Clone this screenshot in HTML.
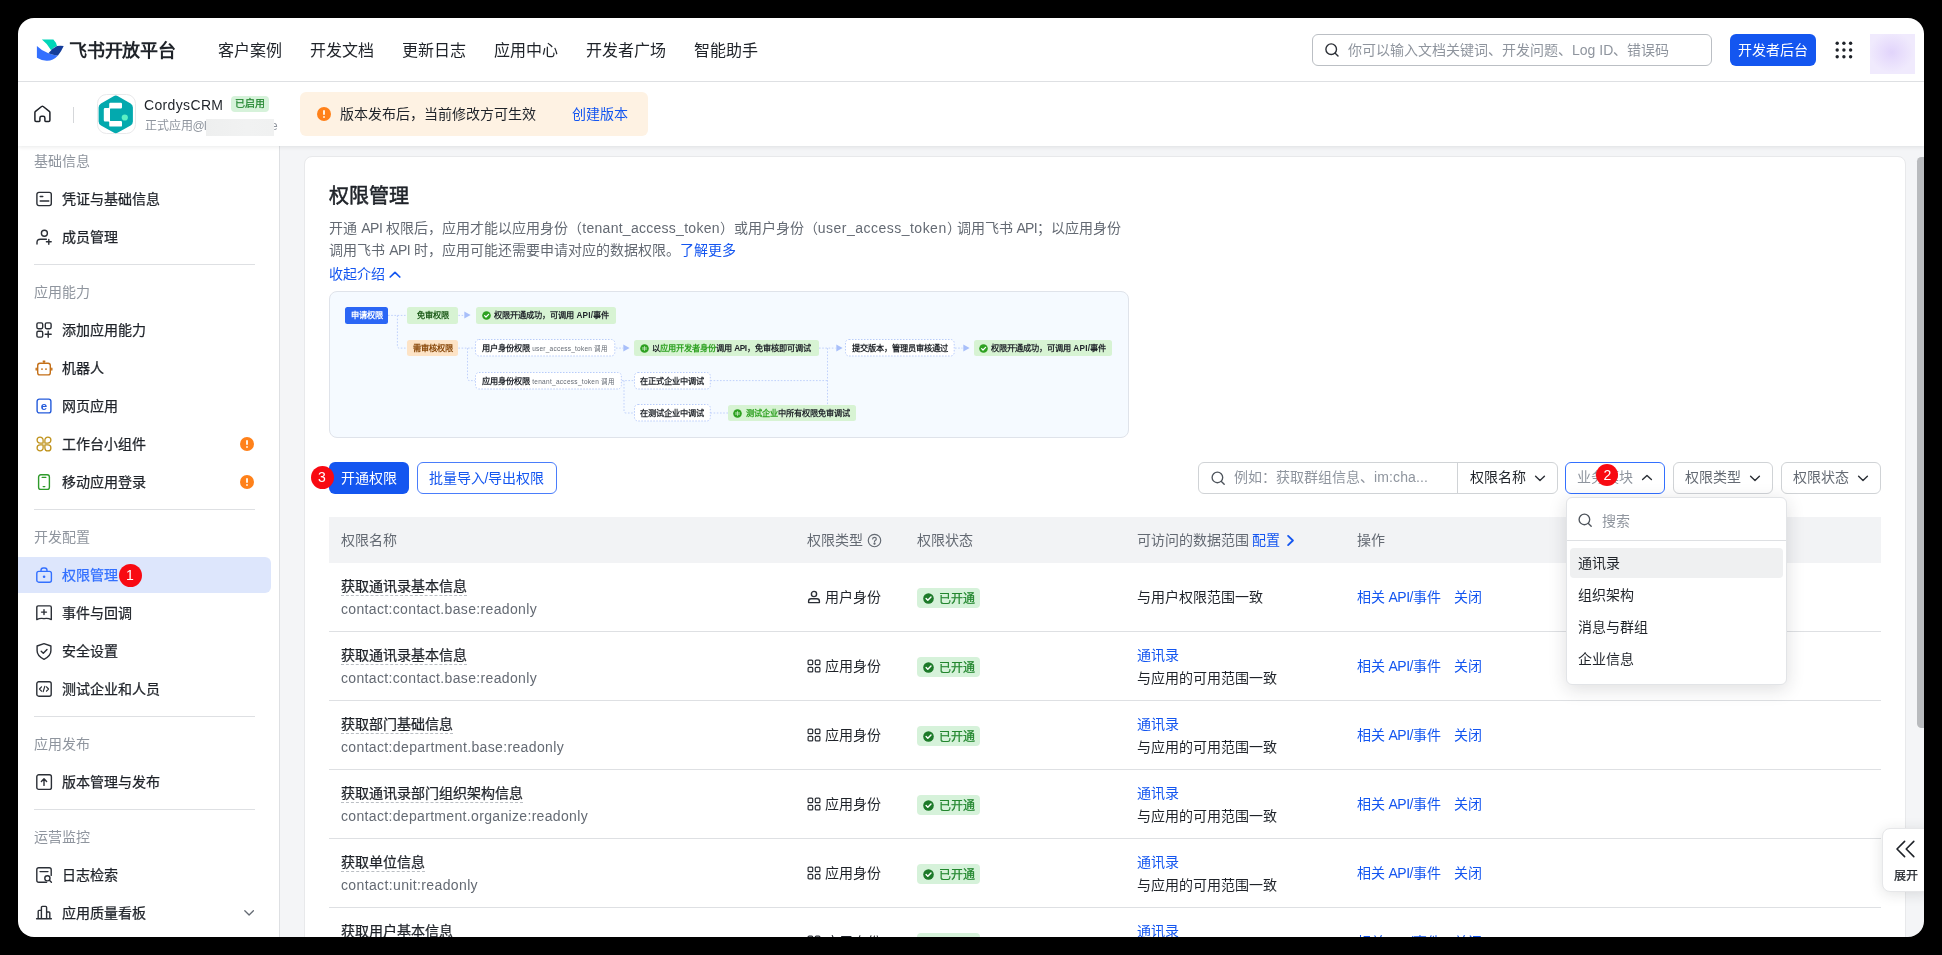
<!DOCTYPE html>
<html lang="zh-CN">
<head>
<meta charset="utf-8">
<title>飞书开放平台 - 权限管理</title>
<style>
*{box-sizing:border-box;margin:0;padding:0}
html,body{width:1942px;height:955px;overflow:hidden;background:#000}
body{font-family:"Liberation Sans",sans-serif;font-size:14px;color:#1f2329;position:relative;-webkit-font-smoothing:antialiased}
#win{position:absolute;left:0;top:0;width:1942px;height:955px;background:#fff;clip-path:inset(18px 18px 18px 18px round 16px);overflow:hidden;will-change:transform}
.abs{position:absolute}
.t{position:absolute;white-space:nowrap;line-height:22px;height:22px}
.blue{color:#1456f0}
.gray{color:#646a73}
.lgray{color:#8f959e}
svg{display:block;position:absolute;overflow:visible}
/* top nav */
#topnav{position:absolute;left:18px;top:18px;width:1906px;height:64px;background:#fff;border-bottom:1px solid #dee0e3}
.nav{position:absolute;top:40px;font-size:16px;line-height:22px;height:22px;color:#1f2329;white-space:nowrap}
/* sub header */
#subhead{position:absolute;left:18px;top:82px;width:1906px;height:63.7px;background:#fff;box-shadow:0 1px 4px rgba(31,35,41,.10)}
/* sidebar */
#side{position:absolute;left:18px;top:145.7px;width:262px;height:800px;background:#fff;border-right:1px solid #dee0e3}
.sg{position:absolute;left:34px;font-size:14px;line-height:22px;height:22px;color:#8f959e;white-space:nowrap}
.si{position:absolute;left:62px;font-size:14px;line-height:22px;height:22px;color:#1f2329;font-weight:500;white-space:nowrap;-webkit-text-stroke:.25px currentColor}
.md{-webkit-text-stroke:.25px currentColor}
.sd{position:absolute;left:34px;width:221px;height:1px;background:#dee0e3}
.warn{position:absolute;width:14px;height:14px;border-radius:50%;background:#ff811a;left:240px}
.warn:before{content:"";position:absolute;left:6.35px;top:3.2px;width:1.3px;height:4.8px;background:#fff1e0;border-radius:1px}
.warn:after{content:"";position:absolute;left:6.3px;top:9.3px;width:1.4px;height:1.4px;background:#fff1e0;border-radius:1px}
.rb{position:absolute;border-radius:50%;background:#f80a12;color:#fff;font-weight:400;text-align:center}
/* main */
#main{position:absolute;left:280px;top:145.7px;width:1644px;height:800px;background:#f4f5f7}
#card{position:absolute;left:304px;top:156.3px;width:1602px;height:800px;background:#fff;border:1px solid #e8e9eb;border-radius:8px}
</style>
</head>
<body>
<div id="win">

<!-- main background + card -->
<div id="main"></div>
<div id="card"></div>

<!-- CONTENT -->
<div class="t " style="left:329px;top:182px;font-size:20px;line-height:28px;height:28px;font-weight:400;color:#1f2329;-webkit-text-stroke:.55px #1f2329">权限管理</div>
<div class="t gray" style="left:329px;top:217px;font-size:14px;line-height:22px;height:22px;">开通</div>
<div class="t gray" style="left:361.3px;top:217px;font-size:14px;line-height:22px;height:22px;"><span style="letter-spacing:-0.526px;">API</span></div>
<div class="t gray" style="left:386px;top:217px;font-size:14px;line-height:22px;height:22px;">权限后，应用才能以应用身份（</div>
<div class="t gray" style="left:582.3px;top:217px;font-size:14px;line-height:22px;height:22px;"><span style="letter-spacing:0.272px;">tenant_access_token</span></div>
<div class="t gray" style="left:720px;top:217px;font-size:14px;line-height:22px;height:22px;">）或用户身份（</div>
<div class="t gray" style="left:817.7px;top:217px;font-size:14px;line-height:22px;height:22px;"><span style="letter-spacing:0.492px;">user_access_token</span></div>
<div class="t gray" style="left:947px;top:217px;font-size:14px;line-height:22px;height:22px;">）</div>
<div class="t gray" style="left:956.5px;top:217px;font-size:14px;line-height:22px;height:22px;">调用飞书</div>
<div class="t gray" style="left:1016.4px;top:217px;font-size:14px;line-height:22px;height:22px;"><span style="letter-spacing:-0.659px;">API</span></div>
<div class="t gray" style="left:1037px;top:217px;font-size:14px;line-height:22px;height:22px;">；以应用身份</div>
<div class="t gray" style="left:329px;top:239px;font-size:14px;line-height:22px;height:22px;">调用飞书</div>
<div class="t gray" style="left:389.3px;top:239px;font-size:14px;line-height:22px;height:22px;"><span style="letter-spacing:-0.659px;">API</span></div>
<div class="t gray" style="left:414px;top:239px;font-size:14px;line-height:22px;height:22px;">时，应用可能还需要申请对应的数据权限。</div>
<div class="t blue" style="left:680px;top:239px;font-size:14px;line-height:22px;height:22px;">了解更多</div>
<div class="t blue" style="left:329px;top:263px;font-size:14px;line-height:22px;height:22px;">收起介绍</div>
<svg style="left:388px;top:267.5px" width="14" height="14" viewBox="0 0 14 14" fill="none" stroke="#1456f0" stroke-width="1.7" stroke-linecap="round" stroke-linejoin="round"><path d="M2.2 9 L7 4.3 L11.8 9"/></svg>
<div class="abs" style="left:329px;top:291px;width:800px;height:147px;background:#f5faff;border:1px solid #dfe3ea;border-radius:8px"></div>
<svg style="left:329px;top:291px" width="800" height="147" viewBox="329 291 800 147" fill="none" stroke="#c0d1fb" stroke-width="1" stroke-dasharray="1.6 1.6"><path d="M388 315.4 H407"/><path d="M397.4 315.4 V346 Q397.4 348.1 399.5 348.1 H407"/><path d="M458.4 315.4 H464"/><path d="M458.4 348.1 H475"/><path d="M467.5 348.1 V378.5 Q467.5 380.6 469.6 380.6 H475"/><path d="M616 348.1 H623"/><path d="M622 380.6 H634"/><path d="M624 380.6 V411 Q624 413 626 413 H634"/><path d="M710.4 380.6 H827.5"/><path d="M827.5 348.1 V405"/><path d="M710.4 413 H728"/><path d="M819 348.1 H835.5"/><path d="M955 348.1 H962.5"/></svg>
<svg style="left:464.3px;top:311.4px" width="7" height="8" viewBox="0 0 7 8"><path d="M0.3 0.4 L6.6 4 L0.3 7.6Z" fill="#a8bffa"/></svg>
<svg style="left:623.2px;top:344.1px" width="7" height="8" viewBox="0 0 7 8"><path d="M0.3 0.4 L6.6 4 L0.3 7.6Z" fill="#a8bffa"/></svg>
<svg style="left:835.5px;top:344.1px" width="7" height="8" viewBox="0 0 7 8"><path d="M0.3 0.4 L6.6 4 L0.3 7.6Z" fill="#a8bffa"/></svg>
<svg style="left:962.6px;top:344.1px" width="7" height="8" viewBox="0 0 7 8"><path d="M0.3 0.4 L6.6 4 L0.3 7.6Z" fill="#a8bffa"/></svg>
<div class="abs" style="left:345px;top:307.2px;width:43px;height:16.4px;line-height:16.4px;background:#2b66f5;color:#fff;border-radius:2.5px;font-size:8.2px;font-weight:700;white-space:nowrap;padding-top:0.9px;text-align:center;">申请权限</div>
<div class="abs" style="left:407.2px;top:307.2px;width:51.2px;height:16.4px;line-height:16.4px;background:#d7f3d3;color:#1c5a18;border-radius:2.5px;font-size:8.2px;font-weight:700;white-space:nowrap;padding-top:0.9px;text-align:center;">免审权限</div>
<div class="abs" style="left:476.1px;top:307.2px;width:140.2px;height:16.4px;line-height:16.4px;background:#d7f3d3;color:#1f2329;border-radius:2.5px;font-size:8.2px;font-weight:700;white-space:nowrap;padding-top:0.9px;padding-left:18px;">权限开通成功，可调用 <span style="letter-spacing:0.266px;">API/</span>事件</div>
<svg style="left:481.5px;top:310.9px" width="9" height="9" viewBox="0 0 9 9"><circle cx="4.5" cy="4.5" r="4.3" fill="#2ea121"/><path d="M2.6 4.6 L4 6 L6.6 3.3" fill="none" stroke="#fff" stroke-width="1.2" stroke-linecap="round" stroke-linejoin="round"/></svg>
<div class="abs" style="left:407.2px;top:340.1px;width:51.2px;height:16px;line-height:16px;background:#fde3c6;color:#8a4a0c;border-radius:2.5px;font-size:8.2px;font-weight:700;white-space:nowrap;padding-top:0.9px;text-align:center;">需审核权限</div>
<svg style="left:475.3px;top:339.25px" width="140.3" height="17.5" viewBox="0 0 140.3 17.5"><rect x="0.5" y="0.5" width="139.3" height="16.5" rx="3.5" fill="#fff" stroke="#b9ccfa" stroke-width="1" stroke-dasharray="1.5 1.5"/></svg>
<div class="abs" style="left:475.3px;top:339.25px;width:140.3px;height:17.5px;line-height:17.5px;background:transparent;color:#1f2329;border-radius:2.5px;font-size:8.2px;font-weight:700;white-space:nowrap;padding-top:0.9px;padding-left:5.6px;border:1px solid transparent;background:transparent;border-radius:4px;line-height:15.5px;">用户身份权限 <span style="font-weight:400;font-size:6.5px;color:#646a73"><span style="letter-spacing:0.234px;">user_access_token</span> 调用</span></div>
<div class="abs" style="left:634px;top:340.1px;width:185px;height:16px;line-height:16px;background:#d7f3d3;color:#1f2329;border-radius:2.5px;font-size:8.2px;font-weight:700;white-space:nowrap;padding-top:0.9px;padding-left:18px;">以<span style="color:#2ea121">应用开发者身份</span>调用 <span style="letter-spacing:-0.452px;">API</span>，免审核即可调试</div>
<svg style="left:639.5px;top:343.6px" width="9" height="9" viewBox="0 0 9 9"><circle cx="4.5" cy="4.5" r="4.3" fill="#2ea121"/><path d="M4.5 2.6 V6.4 M3 3.4 V5.6 M6 3.4 V5.6" fill="none" stroke="#d9f5d6" stroke-width="0.8" stroke-linecap="round"/></svg>
<svg style="left:845.4px;top:339.25px" width="109.7" height="17.5" viewBox="0 0 109.7 17.5"><rect x="0.5" y="0.5" width="108.7" height="16.5" rx="3.5" fill="#fff" stroke="#b9ccfa" stroke-width="1" stroke-dasharray="1.5 1.5"/></svg>
<div class="abs" style="left:845.4px;top:339.25px;width:109.7px;height:17.5px;line-height:17.5px;background:transparent;color:#1f2329;border-radius:2.5px;font-size:8.2px;font-weight:700;white-space:nowrap;padding-top:0.9px;text-align:center;border:1px solid transparent;background:transparent;border-radius:4px;line-height:15.5px;">提交版本，管理员审核通过</div>
<div class="abs" style="left:973.5px;top:340.1px;width:138.6px;height:16px;line-height:16px;background:#d7f3d3;color:#1f2329;border-radius:2.5px;font-size:8.2px;font-weight:700;white-space:nowrap;padding-top:0.9px;padding-left:17.5px;">权限开通成功，可调用 <span style="letter-spacing:0.266px;">API/</span>事件</div>
<svg style="left:978.5px;top:343.6px" width="9" height="9" viewBox="0 0 9 9"><circle cx="4.5" cy="4.5" r="4.3" fill="#2ea121"/><path d="M2.6 4.6 L4 6 L6.6 3.3" fill="none" stroke="#fff" stroke-width="1.2" stroke-linecap="round" stroke-linejoin="round"/></svg>
<svg style="left:475.3px;top:371.85px" width="146.8" height="17.5" viewBox="0 0 146.8 17.5"><rect x="0.5" y="0.5" width="145.8" height="16.5" rx="3.5" fill="#fff" stroke="#b9ccfa" stroke-width="1" stroke-dasharray="1.5 1.5"/></svg>
<div class="abs" style="left:475.3px;top:371.85px;width:146.8px;height:17.5px;line-height:17.5px;background:transparent;color:#1f2329;border-radius:2.5px;font-size:8.2px;font-weight:700;white-space:nowrap;padding-top:0.9px;padding-left:5.6px;border:1px solid transparent;background:transparent;border-radius:4px;line-height:15.5px;">应用身份权限 <span style="font-weight:400;font-size:6.5px;color:#646a73"><span style="letter-spacing:0.293px;">tenant_access_token</span> 调用</span></div>
<svg style="left:633.6px;top:371.85px" width="76.8" height="17.5" viewBox="0 0 76.8 17.5"><rect x="0.5" y="0.5" width="75.8" height="16.5" rx="3.5" fill="#fff" stroke="#b9ccfa" stroke-width="1" stroke-dasharray="1.5 1.5"/></svg>
<div class="abs" style="left:633.6px;top:371.85px;width:76.8px;height:17.5px;line-height:17.5px;background:transparent;color:#1f2329;border-radius:2.5px;font-size:8.2px;font-weight:700;white-space:nowrap;padding-top:0.9px;text-align:center;border:1px solid transparent;background:transparent;border-radius:4px;line-height:15.5px;">在正式企业中调试</div>
<svg style="left:633.6px;top:404.25px" width="76.8" height="17.5" viewBox="0 0 76.8 17.5"><rect x="0.5" y="0.5" width="75.8" height="16.5" rx="3.5" fill="#fff" stroke="#b9ccfa" stroke-width="1" stroke-dasharray="1.5 1.5"/></svg>
<div class="abs" style="left:633.6px;top:404.25px;width:76.8px;height:17.5px;line-height:17.5px;background:transparent;color:#1f2329;border-radius:2.5px;font-size:8.2px;font-weight:700;white-space:nowrap;padding-top:0.9px;text-align:center;border:1px solid transparent;background:transparent;border-radius:4px;line-height:15.5px;">在测试企业中调试</div>
<div class="abs" style="left:728px;top:405px;width:127.8px;height:16px;line-height:16px;background:#d7f3d3;color:#1f2329;border-radius:2.5px;font-size:8.2px;font-weight:700;white-space:nowrap;padding-top:0.9px;padding-left:17.5px;"><span style="color:#2ea121">测试企业</span>中所有权限免审调试</div>
<svg style="left:733.2px;top:408.5px" width="9" height="9" viewBox="0 0 9 9"><circle cx="4.5" cy="4.5" r="4.3" fill="#2ea121"/><path d="M4.5 2.6 V6.4 M3 3.4 V5.6 M6 3.4 V5.6" fill="none" stroke="#d9f5d6" stroke-width="0.8" stroke-linecap="round"/></svg>
<div class="abs" style="left:329px;top:461.5px;width:80px;height:32px;border-radius:6px;background:#1456f0;color:#fff;font-size:14px;line-height:32px;text-align:center;white-space:nowrap">开通权限</div>
<div class="rb" style="left:310.5px;top:465.5px;width:23px;height:23px;font-size:14px;line-height:23px">3</div>
<div class="abs" style="left:416.5px;top:461.5px;width:140px;height:32px;border-radius:6px;border:1px solid #4a7dfb;background:#fff;color:#1456f0;font-size:14px;line-height:30px;text-align:center;white-space:nowrap">批量导入<span style="letter-spacing:0.000px;">/</span>导出权限</div>
<div class="abs" style="left:1198px;top:461.5px;width:359.5px;height:32px;border:1px solid #d0d3d6;border-radius:6px;background:#fff"></div>
<div class="abs" style="left:1457px;top:462.5px;width:1px;height:30px;background:#d0d3d6"></div>
<svg style="left:1210px;top:469.5px" width="16" height="16" viewBox="0 0 16 16" fill="none" stroke="#4e545c" stroke-width="1.35" stroke-linecap="round"><circle cx="7.4" cy="7.4" r="5.3"/><path d="M11.4 11.4 L14.2 14.2"/></svg>
<div class="t lgray" style="left:1234px;top:466.3px;font-size:14px;line-height:22px;height:22px;">例如：获取群组信息、<span style="letter-spacing:0.122px;">im:cha...</span></div>
<div class="t " style="left:1469.5px;top:466.3px;font-size:14px;line-height:22px;height:22px;">权限名称</div>
<svg style="left:1533.5px;top:471.5px" width="12" height="12" viewBox="0 0 12 12" fill="none" stroke="#2b2f36" stroke-width="1.4" stroke-linecap="round" stroke-linejoin="round"><path d="M1.6 4.2 L6 8.4 L10.4 4.2"/></svg>
<div class="abs" style="left:1564.8px;top:461.5px;width:100px;height:32px;border:1px solid #3370ff;border-radius:6px;background:#fff"></div>
<div class="t lgray" style="left:1576.8px;top:466.3px;font-size:14px;line-height:22px;height:22px;">业务模块</div>
<svg style="left:1641px;top:471.5px" width="12" height="12" viewBox="0 0 12 12" fill="none" stroke="#2b2f36" stroke-width="1.4" stroke-linecap="round" stroke-linejoin="round"><path d="M1.6 7.6 L6 3.4 L10.4 7.6"/></svg>
<div class="abs" style="left:1672.8px;top:461.5px;width:100px;height:32px;border:1px solid #d0d3d6;border-radius:6px;background:#fff"></div>
<div class="t gray" style="left:1684.8px;top:466.3px;font-size:14px;line-height:22px;height:22px;">权限类型</div>
<svg style="left:1749px;top:471.5px" width="12" height="12" viewBox="0 0 12 12" fill="none" stroke="#2b2f36" stroke-width="1.4" stroke-linecap="round" stroke-linejoin="round"><path d="M1.6 4.2 L6 8.4 L10.4 4.2"/></svg>
<div class="abs" style="left:1780.8px;top:461.5px;width:100px;height:32px;border:1px solid #d0d3d6;border-radius:6px;background:#fff"></div>
<div class="t gray" style="left:1792.8px;top:466.3px;font-size:14px;line-height:22px;height:22px;">权限状态</div>
<svg style="left:1857px;top:471.5px" width="12" height="12" viewBox="0 0 12 12" fill="none" stroke="#2b2f36" stroke-width="1.4" stroke-linecap="round" stroke-linejoin="round"><path d="M1.6 4.2 L6 8.4 L10.4 4.2"/></svg>
<div class="abs" style="left:329px;top:517px;width:1552px;height:46px;background:#f2f3f5"></div>
<div class="t gray" style="left:341px;top:529px;font-size:14px;line-height:22px;height:22px;">权限名称</div>
<div class="t gray" style="left:807px;top:529px;font-size:14px;line-height:22px;height:22px;">权限类型</div>
<svg style="left:866.5px;top:532.5px" width="15" height="15" viewBox="0 0 14 14" fill="none" stroke="#646a73" stroke-width="1.1" stroke-linecap="round"><circle cx="7" cy="7" r="5.8"/><path d="M5.3 5.6 Q5.3 4 7 4 Q8.7 4 8.7 5.5 Q8.7 6.5 7.6 7 Q7 7.3 7 8.2"/><circle cx="7" cy="10" r="0.5" fill="#646a73"/></svg>
<div class="t gray" style="left:917px;top:529px;font-size:14px;line-height:22px;height:22px;">权限状态</div>
<div class="t gray" style="left:1137px;top:529px;font-size:14px;line-height:22px;height:22px;">可访问的数据范围</div>
<div class="t blue" style="left:1252px;top:529px;font-size:14px;line-height:22px;height:22px;">配置</div>
<svg style="left:1283.5px;top:533.5px" width="13" height="13" viewBox="0 0 12 12" fill="none" stroke="#1456f0" stroke-width="1.7" stroke-linecap="round" stroke-linejoin="round"><path d="M3.8 1.8 L8.2 6 L3.8 10.2"/></svg>
<div class="t gray" style="left:1357px;top:529px;font-size:14px;line-height:22px;height:22px;">操作</div>
<div class="abs" style="left:329px;top:631px;width:1552px;height:1px;background:#dee0e3"></div>
<div class="t " style="left:341px;top:575px;font-size:14px;line-height:22px;height:22px;font-weight:500;-webkit-text-stroke:.25px #1f2329"><span style="border-bottom:1px dashed #bbbfc4;padding-bottom:0px;display:inline-block;line-height:19px;height:19px">获取通讯录基本信息</span></div>
<div class="t gray" style="left:341px;top:597.5px;font-size:14px;line-height:22px;height:22px;"><span style="letter-spacing:0.344px;">contact:contact.base:readonly</span></div>
<svg style="left:807px;top:590px" width="14" height="14" viewBox="0 0 14 14" fill="none" stroke="#2b2f36" stroke-width="1.4" stroke-linecap="round" stroke-linejoin="round"><circle cx="7" cy="4" r="2.6"/><path d="M1.6 12.6 V11.2 Q1.6 8.8 4 8.8 H10 Q12.4 8.8 12.4 11.2 V12.6 Z"/></svg>
<div class="t " style="left:825px;top:586px;font-size:14px;line-height:22px;height:22px;">用户身份</div>
<div class="abs" style="left:917px;top:588px;width:63px;height:20px;border-radius:4px;background:#d6f2da"></div>
<svg style="left:923px;top:592.5px" width="11" height="11" viewBox="0 0 11 11"><circle cx="5.5" cy="5.5" r="5.3" fill="#1d7a29"/><path d="M3.1 5.6 L4.8 7.3 L8 3.9" fill="none" stroke="#fff" stroke-width="1.4" stroke-linecap="round" stroke-linejoin="round"/></svg>
<div class="t " style="left:939px;top:588.8px;font-size:12px;line-height:20px;height:20px;color:#23872f;font-weight:500;-webkit-text-stroke:.25px #23872f">已开通</div>
<div class="t " style="left:1137px;top:586px;font-size:14px;line-height:22px;height:22px;">与用户权限范围一致</div>
<div class="t blue" style="left:1357px;top:586px;font-size:14px;line-height:22px;height:22px;">相关<span style="letter-spacing:-0.472px;"> API/</span>事件</div>
<div class="t blue" style="left:1454px;top:586px;font-size:14px;line-height:22px;height:22px;">关闭</div>
<div class="abs" style="left:329px;top:700px;width:1552px;height:1px;background:#dee0e3"></div>
<div class="t " style="left:341px;top:644px;font-size:14px;line-height:22px;height:22px;font-weight:500;-webkit-text-stroke:.25px #1f2329"><span style="border-bottom:1px dashed #bbbfc4;padding-bottom:0px;display:inline-block;line-height:19px;height:19px">获取通讯录基本信息</span></div>
<div class="t gray" style="left:341px;top:666.5px;font-size:14px;line-height:22px;height:22px;"><span style="letter-spacing:0.344px;">contact:contact.base:readonly</span></div>
<svg style="left:807px;top:659px" width="14" height="14" viewBox="0 0 14 14" fill="none" stroke="#2b2f36" stroke-width="1.2"><rect x="1.1" y="1.1" width="4.6" height="4.6" rx="1"/><rect x="8.3" y="1.1" width="4.6" height="4.6" rx="1"/><rect x="1.1" y="8.3" width="4.6" height="4.6" rx="1"/><rect x="8.3" y="8.3" width="4.6" height="4.6" rx="1"/></svg>
<div class="t " style="left:825px;top:655px;font-size:14px;line-height:22px;height:22px;">应用身份</div>
<div class="abs" style="left:917px;top:657px;width:63px;height:20px;border-radius:4px;background:#d6f2da"></div>
<svg style="left:923px;top:661.5px" width="11" height="11" viewBox="0 0 11 11"><circle cx="5.5" cy="5.5" r="5.3" fill="#1d7a29"/><path d="M3.1 5.6 L4.8 7.3 L8 3.9" fill="none" stroke="#fff" stroke-width="1.4" stroke-linecap="round" stroke-linejoin="round"/></svg>
<div class="t " style="left:939px;top:657.8px;font-size:12px;line-height:20px;height:20px;color:#23872f;font-weight:500;-webkit-text-stroke:.25px #23872f">已开通</div>
<div class="t blue" style="left:1137px;top:644px;font-size:14px;line-height:22px;height:22px;">通讯录</div>
<div class="t " style="left:1137px;top:666.5px;font-size:14px;line-height:22px;height:22px;">与应用的可用范围一致</div>
<div class="t blue" style="left:1357px;top:655px;font-size:14px;line-height:22px;height:22px;">相关<span style="letter-spacing:-0.472px;"> API/</span>事件</div>
<div class="t blue" style="left:1454px;top:655px;font-size:14px;line-height:22px;height:22px;">关闭</div>
<div class="abs" style="left:329px;top:769px;width:1552px;height:1px;background:#dee0e3"></div>
<div class="t " style="left:341px;top:713px;font-size:14px;line-height:22px;height:22px;font-weight:500;-webkit-text-stroke:.25px #1f2329"><span style="border-bottom:1px dashed #bbbfc4;padding-bottom:0px;display:inline-block;line-height:19px;height:19px">获取部门基础信息</span></div>
<div class="t gray" style="left:341px;top:735.5px;font-size:14px;line-height:22px;height:22px;"><span style="letter-spacing:0.353px;">contact:department.base:readonly</span></div>
<svg style="left:807px;top:728px" width="14" height="14" viewBox="0 0 14 14" fill="none" stroke="#2b2f36" stroke-width="1.2"><rect x="1.1" y="1.1" width="4.6" height="4.6" rx="1"/><rect x="8.3" y="1.1" width="4.6" height="4.6" rx="1"/><rect x="1.1" y="8.3" width="4.6" height="4.6" rx="1"/><rect x="8.3" y="8.3" width="4.6" height="4.6" rx="1"/></svg>
<div class="t " style="left:825px;top:724px;font-size:14px;line-height:22px;height:22px;">应用身份</div>
<div class="abs" style="left:917px;top:726px;width:63px;height:20px;border-radius:4px;background:#d6f2da"></div>
<svg style="left:923px;top:730.5px" width="11" height="11" viewBox="0 0 11 11"><circle cx="5.5" cy="5.5" r="5.3" fill="#1d7a29"/><path d="M3.1 5.6 L4.8 7.3 L8 3.9" fill="none" stroke="#fff" stroke-width="1.4" stroke-linecap="round" stroke-linejoin="round"/></svg>
<div class="t " style="left:939px;top:726.8px;font-size:12px;line-height:20px;height:20px;color:#23872f;font-weight:500;-webkit-text-stroke:.25px #23872f">已开通</div>
<div class="t blue" style="left:1137px;top:713px;font-size:14px;line-height:22px;height:22px;">通讯录</div>
<div class="t " style="left:1137px;top:735.5px;font-size:14px;line-height:22px;height:22px;">与应用的可用范围一致</div>
<div class="t blue" style="left:1357px;top:724px;font-size:14px;line-height:22px;height:22px;">相关<span style="letter-spacing:-0.472px;"> API/</span>事件</div>
<div class="t blue" style="left:1454px;top:724px;font-size:14px;line-height:22px;height:22px;">关闭</div>
<div class="abs" style="left:329px;top:838px;width:1552px;height:1px;background:#dee0e3"></div>
<div class="t " style="left:341px;top:782px;font-size:14px;line-height:22px;height:22px;font-weight:500;-webkit-text-stroke:.25px #1f2329"><span style="border-bottom:1px dashed #bbbfc4;padding-bottom:0px;display:inline-block;line-height:19px;height:19px">获取通讯录部门组织架构信息</span></div>
<div class="t gray" style="left:341px;top:804.5px;font-size:14px;line-height:22px;height:22px;"><span style="letter-spacing:0.332px;">contact:department.organize:readonly</span></div>
<svg style="left:807px;top:797px" width="14" height="14" viewBox="0 0 14 14" fill="none" stroke="#2b2f36" stroke-width="1.2"><rect x="1.1" y="1.1" width="4.6" height="4.6" rx="1"/><rect x="8.3" y="1.1" width="4.6" height="4.6" rx="1"/><rect x="1.1" y="8.3" width="4.6" height="4.6" rx="1"/><rect x="8.3" y="8.3" width="4.6" height="4.6" rx="1"/></svg>
<div class="t " style="left:825px;top:793px;font-size:14px;line-height:22px;height:22px;">应用身份</div>
<div class="abs" style="left:917px;top:795px;width:63px;height:20px;border-radius:4px;background:#d6f2da"></div>
<svg style="left:923px;top:799.5px" width="11" height="11" viewBox="0 0 11 11"><circle cx="5.5" cy="5.5" r="5.3" fill="#1d7a29"/><path d="M3.1 5.6 L4.8 7.3 L8 3.9" fill="none" stroke="#fff" stroke-width="1.4" stroke-linecap="round" stroke-linejoin="round"/></svg>
<div class="t " style="left:939px;top:795.8px;font-size:12px;line-height:20px;height:20px;color:#23872f;font-weight:500;-webkit-text-stroke:.25px #23872f">已开通</div>
<div class="t blue" style="left:1137px;top:782px;font-size:14px;line-height:22px;height:22px;">通讯录</div>
<div class="t " style="left:1137px;top:804.5px;font-size:14px;line-height:22px;height:22px;">与应用的可用范围一致</div>
<div class="t blue" style="left:1357px;top:793px;font-size:14px;line-height:22px;height:22px;">相关<span style="letter-spacing:-0.472px;"> API/</span>事件</div>
<div class="t blue" style="left:1454px;top:793px;font-size:14px;line-height:22px;height:22px;">关闭</div>
<div class="abs" style="left:329px;top:907px;width:1552px;height:1px;background:#dee0e3"></div>
<div class="t " style="left:341px;top:851px;font-size:14px;line-height:22px;height:22px;font-weight:500;-webkit-text-stroke:.25px #1f2329"><span style="border-bottom:1px dashed #bbbfc4;padding-bottom:0px;display:inline-block;line-height:19px;height:19px">获取单位信息</span></div>
<div class="t gray" style="left:341px;top:873.5px;font-size:14px;line-height:22px;height:22px;"><span style="letter-spacing:0.371px;">contact:unit:readonly</span></div>
<svg style="left:807px;top:866px" width="14" height="14" viewBox="0 0 14 14" fill="none" stroke="#2b2f36" stroke-width="1.2"><rect x="1.1" y="1.1" width="4.6" height="4.6" rx="1"/><rect x="8.3" y="1.1" width="4.6" height="4.6" rx="1"/><rect x="1.1" y="8.3" width="4.6" height="4.6" rx="1"/><rect x="8.3" y="8.3" width="4.6" height="4.6" rx="1"/></svg>
<div class="t " style="left:825px;top:862px;font-size:14px;line-height:22px;height:22px;">应用身份</div>
<div class="abs" style="left:917px;top:864px;width:63px;height:20px;border-radius:4px;background:#d6f2da"></div>
<svg style="left:923px;top:868.5px" width="11" height="11" viewBox="0 0 11 11"><circle cx="5.5" cy="5.5" r="5.3" fill="#1d7a29"/><path d="M3.1 5.6 L4.8 7.3 L8 3.9" fill="none" stroke="#fff" stroke-width="1.4" stroke-linecap="round" stroke-linejoin="round"/></svg>
<div class="t " style="left:939px;top:864.8px;font-size:12px;line-height:20px;height:20px;color:#23872f;font-weight:500;-webkit-text-stroke:.25px #23872f">已开通</div>
<div class="t blue" style="left:1137px;top:851px;font-size:14px;line-height:22px;height:22px;">通讯录</div>
<div class="t " style="left:1137px;top:873.5px;font-size:14px;line-height:22px;height:22px;">与应用的可用范围一致</div>
<div class="t blue" style="left:1357px;top:862px;font-size:14px;line-height:22px;height:22px;">相关<span style="letter-spacing:-0.472px;"> API/</span>事件</div>
<div class="t blue" style="left:1454px;top:862px;font-size:14px;line-height:22px;height:22px;">关闭</div>
<div class="t " style="left:341px;top:920px;font-size:14px;line-height:22px;height:22px;font-weight:500;-webkit-text-stroke:.25px #1f2329"><span style="border-bottom:1px dashed #bbbfc4;padding-bottom:0px;display:inline-block;line-height:19px;height:19px">获取用户基本信息</span></div>
<div class="t gray" style="left:341px;top:942.5px;font-size:14px;line-height:22px;height:22px;"><span style="letter-spacing:0.141px;">contact:user.base:readonly</span></div>
<svg style="left:807px;top:935px" width="14" height="14" viewBox="0 0 14 14" fill="none" stroke="#2b2f36" stroke-width="1.2"><rect x="1.1" y="1.1" width="4.6" height="4.6" rx="1"/><rect x="8.3" y="1.1" width="4.6" height="4.6" rx="1"/><rect x="1.1" y="8.3" width="4.6" height="4.6" rx="1"/><rect x="8.3" y="8.3" width="4.6" height="4.6" rx="1"/></svg>
<div class="t " style="left:825px;top:931px;font-size:14px;line-height:22px;height:22px;">应用身份</div>
<div class="abs" style="left:917px;top:933px;width:63px;height:20px;border-radius:4px;background:#d6f2da"></div>
<svg style="left:923px;top:937.5px" width="11" height="11" viewBox="0 0 11 11"><circle cx="5.5" cy="5.5" r="5.3" fill="#1d7a29"/><path d="M3.1 5.6 L4.8 7.3 L8 3.9" fill="none" stroke="#fff" stroke-width="1.4" stroke-linecap="round" stroke-linejoin="round"/></svg>
<div class="t " style="left:939px;top:933.8px;font-size:12px;line-height:20px;height:20px;color:#23872f;font-weight:500;-webkit-text-stroke:.25px #23872f">已开通</div>
<div class="t blue" style="left:1137px;top:920px;font-size:14px;line-height:22px;height:22px;">通讯录</div>
<div class="t " style="left:1137px;top:942.5px;font-size:14px;line-height:22px;height:22px;">与应用的可用范围一致</div>
<div class="t blue" style="left:1357px;top:931px;font-size:14px;line-height:22px;height:22px;">相关<span style="letter-spacing:-0.472px;"> API/</span>事件</div>
<div class="t blue" style="left:1454px;top:931px;font-size:14px;line-height:22px;height:22px;">关闭</div>
<div class="abs" style="left:1565.5px;top:496.5px;width:221px;height:188.5px;background:#fff;border:1px solid #e2e4e7;border-radius:6px;box-shadow:0 4px 18px rgba(31,35,41,.15)"></div>
<svg style="left:1577px;top:512px" width="16" height="16" viewBox="0 0 16 16" fill="none" stroke="#4e545c" stroke-width="1.35" stroke-linecap="round"><circle cx="7.4" cy="7.4" r="5.3"/><path d="M11.4 11.4 L14.2 14.2"/></svg>
<div class="t lgray" style="left:1602px;top:509.5px;font-size:14px;line-height:22px;height:22px;">搜索</div>
<div class="abs" style="left:1566.5px;top:540px;width:219px;height:1px;background:#dee0e3"></div>
<div class="abs" style="left:1570px;top:547.5px;width:213px;height:30px;background:#eff0f1;border-radius:4px"></div>
<div class="t " style="left:1578px;top:551.5px;font-size:14px;line-height:22px;height:22px;">通讯录</div>
<div class="t " style="left:1578px;top:583.5px;font-size:14px;line-height:22px;height:22px;">组织架构</div>
<div class="t " style="left:1578px;top:615.5px;font-size:14px;line-height:22px;height:22px;">消息与群组</div>
<div class="t " style="left:1578px;top:647.5px;font-size:14px;line-height:22px;height:22px;">企业信息</div>
<div class="rb" style="left:1596.3px;top:463.6px;width:22px;height:22px;font-size:14px;line-height:22px">2</div>
<!-- /CONTENT -->

<!-- SIDEBAR -->
<div id="side"></div>
<div class="sg" style="top:150px">基础信息</div>
<svg style="left:36px;top:191px" width="16" height="16" viewBox="0 0 16 16" fill="none" stroke="#2b2f36" stroke-width="1.4" stroke-linecap="round" stroke-linejoin="round"><rect x="0.9" y="1.4" width="14.4" height="13.2" rx="2"/><path d="M4.2 5.5 H6.8 M4.2 10 H12.8"/></svg>
<div class="si" style="top:188px">凭证与基础信息</div>
<svg style="left:36px;top:229px" width="16" height="16" viewBox="0 0 16 16" fill="none" stroke="#2b2f36" stroke-width="1.4" stroke-linecap="round" stroke-linejoin="round"><circle cx="8.4" cy="4.2" r="3"/><path d="M1 15 V13.4 Q1 10.3 4.4 10.3 H10.4 M12.8 10.4 V15.2 M10.4 12.8 H15.2"/></svg>
<div class="si" style="top:226px">成员管理</div>
<div class="sd" style="top:264px"></div>
<div class="sg" style="top:281px">应用能力</div>
<svg style="left:36px;top:322px" width="16" height="16" viewBox="0 0 16 16" fill="none" stroke="#2b2f36" stroke-width="1.4" stroke-linecap="round" stroke-linejoin="round"><rect x="0.9" y="0.9" width="5.8" height="5.8" rx="1.4"/><rect x="9.3" y="0.9" width="5.8" height="5.8" rx="1.4"/><rect x="0.9" y="9.3" width="5.8" height="5.8" rx="1.4"/><path d="M12.2 9.2 V15.2 M9.2 12.2 H15.2"/></svg>
<div class="si" style="top:319px">添加应用能力</div>
<svg style="left:36px;top:360px" width="16" height="16" viewBox="0 0 16 16" fill="none" stroke="#c46f17" stroke-width="1.4" stroke-linecap="round" stroke-linejoin="round"><rect x="1.7" y="3.3" width="12.6" height="11.6" rx="2.2"/><path d="M8 3.2 V1.4 M7.2 1.3 H8.8 M0.2 8.2 V10 M15.8 8.2 V10"/><circle cx="6" cy="9.1" r="0.95" fill="#c46f17" stroke="none"/><circle cx="10" cy="9.1" r="0.95" fill="#c46f17" stroke="none"/></svg>
<div class="si" style="top:357px">机器人</div>
<svg style="left:36px;top:398px" width="16" height="16" viewBox="0 0 16 16" fill="none" stroke="#245bdb" stroke-width="1.4" stroke-linecap="round" stroke-linejoin="round"><rect x="1.1" y="1.1" width="13.8" height="13.8" rx="2.2"/><text x="8" y="11.6" font-family="Liberation Sans, sans-serif" font-size="11.5" font-weight="700" text-anchor="middle" fill="#245bdb" stroke="none">e</text></svg>
<div class="si" style="top:395px">网页应用</div>
<svg style="left:36px;top:436px" width="16" height="16" viewBox="0 0 16 16" fill="none" stroke="#bf921b" stroke-width="1.4" stroke-linecap="round" stroke-linejoin="round"><path d="M4.1 1.1 A3 3 0 0 1 7.1 4.1 V7.1 H4.1 A3 3 0 0 1 4.1 1.1Z M11.9 1.1 A3 3 0 0 1 11.9 7.1 H8.9 V4.1 A3 3 0 0 1 11.9 1.1Z M4.1 8.9 H7.1 V11.9 A3 3 0 1 1 4.1 8.9Z M8.9 8.9 H11.9 A3 3 0 1 1 8.9 11.9Z" stroke-width="1.3"/></svg>
<div class="si" style="top:433px">工作台小组件</div>
<div class="warn" style="top:437px"></div>
<svg style="left:36px;top:474px" width="16" height="16" viewBox="0 0 16 16" fill="none" stroke="#2f9a2b" stroke-width="1.4" stroke-linecap="round" stroke-linejoin="round"><rect x="2.6" y="0.8" width="10.8" height="14.6" rx="2.2"/><path d="M6.2 3.4 H9.8 M7.2 12.6 H8.8"/></svg>
<div class="si" style="top:471px">移动应用登录</div>
<div class="warn" style="top:475px"></div>
<div class="sd" style="top:509px"></div>
<div class="sg" style="top:526px">开发配置</div>
<div class="abs" style="left:18px;top:557px;width:253px;height:36px;background:#dde6fc;border-radius:0 6px 6px 0"></div>
<svg style="left:36px;top:567px" width="16" height="16" viewBox="0 0 16 16" fill="none" stroke="#3370ff" stroke-width="1.4" stroke-linecap="round" stroke-linejoin="round"><rect x="0.8" y="4.4" width="14.6" height="10.8" rx="2"/><path d="M5 4.4 V3.2 Q5 1 7.2 1 H8.8 Q11 1 11 3.2 V4.4"/><circle cx="8.1" cy="9.8" r="1.3" fill="#3370ff" stroke="none"/></svg>
<div class="si" style="top:564px;color:#3370ff">权限管理</div>
<div class="rb" style="left:118.5px;top:563.5px;width:23px;height:23px;font-size:14px;line-height:23px">1</div>
<svg style="left:36px;top:605px" width="16" height="16" viewBox="0 0 16 16" fill="none" stroke="#2b2f36" stroke-width="1.4" stroke-linecap="round" stroke-linejoin="round"><path d="M2.3 0.9 H13.8 Q15.3 0.9 15.3 2.4 V14.6 Q11.6 12.7 8 13.7 Q4.4 12.7 0.8 14.6 V2.4 Q0.8 0.9 2.3 0.9Z"/><path d="M8 4.6 V9.6 M5.5 7.1 H10.5"/></svg>
<div class="si" style="top:602px">事件与回调</div>
<svg style="left:36px;top:643px" width="16" height="16" viewBox="0 0 16 16" fill="none" stroke="#2b2f36" stroke-width="1.4" stroke-linecap="round" stroke-linejoin="round"><path d="M8 0.7 L14.9 3 V7.8 Q14.9 13 8 16.3 Q1.1 13 1.1 7.8 V3 Z"/><path d="M5.2 8.2 L7.3 10.3 L11 6.4"/></svg>
<div class="si" style="top:640px">安全设置</div>
<svg style="left:36px;top:681px" width="16" height="16" viewBox="0 0 16 16" fill="none" stroke="#2b2f36" stroke-width="1.4" stroke-linecap="round" stroke-linejoin="round"><rect x="0.8" y="0.8" width="14.4" height="14.4" rx="2"/><path d="M5.5 5.8 L3.5 8 L5.5 10.2 M10.5 5.8 L12.5 8 L10.5 10.2 M8.8 5.4 L7.2 10.6" stroke-width="1.2"/></svg>
<div class="si" style="top:678px">测试企业和人员</div>
<div class="sd" style="top:716px"></div>
<div class="sg" style="top:733px">应用发布</div>
<svg style="left:36px;top:774px" width="16" height="16" viewBox="0 0 16 16" fill="none" stroke="#2b2f36" stroke-width="1.4" stroke-linecap="round" stroke-linejoin="round"><rect x="0.8" y="0.8" width="14.6" height="14.6" rx="2"/><path d="M8 11.4 V5 M5.4 7.4 L8 4.8 L10.6 7.4"/></svg>
<div class="si" style="top:771px">版本管理与发布</div>
<div class="sd" style="top:809px"></div>
<div class="sg" style="top:826px">运营监控</div>
<svg style="left:36px;top:867px" width="16" height="16" viewBox="0 0 16 16" fill="none" stroke="#2b2f36" stroke-width="1.4" stroke-linecap="round" stroke-linejoin="round"><path d="M10.6 15.2 H2.8 Q0.8 15.2 0.8 13.2 V2.8 Q0.8 0.8 2.8 0.8 H13.2 Q15.2 0.8 15.2 2.8 V8.4"/><path d="M4 4.6 H12"/><circle cx="11.4" cy="11.3" r="2.6"/><path d="M13.4 13.3 L15.4 15.3"/></svg>
<div class="si" style="top:864px">日志检索</div>
<svg style="left:36px;top:905px" width="16" height="16" viewBox="0 0 16 16" fill="none" stroke="#2b2f36" stroke-width="1.4" stroke-linecap="round" stroke-linejoin="round"><path d="M0.6 13.8 H15.4 M2.2 13.8 V6.2 Q2.2 5.4 3 5.4 H5.4 M5.4 13.8 V2.4 Q5.4 1.4 6.4 1.4 H9.6 Q10.6 1.4 10.6 2.4 V13.8 M10.6 7 H13 Q13.8 7 13.8 7.8 V13.8"/></svg>
<div class="si" style="top:902px">应用质量看板</div>
<svg style="left:243px;top:907px" width="12" height="12" viewBox="0 0 12 12" fill="none" stroke="#646a73" stroke-width="1.3" stroke-linecap="round" stroke-linejoin="round"><path d="M1.8 3.8 L6.1 8 L10.4 3.8"/></svg>
<!-- /SIDEBAR -->

<!-- SUBHEAD -->
<div id="subhead"></div>
<!-- home icon -->
<svg style="left:33px;top:104px" width="20" height="20" viewBox="33 104 20 20" fill="none" stroke="#1f2329" stroke-width="1.5" stroke-linejoin="round" stroke-linecap="round">
  <path d="M34.9 112.6 Q34.9 111.9 35.5 111.4 L41.6 106.5 Q42.4 105.9 43.2 106.5 L49.3 111.4 Q49.9 111.9 49.9 112.6 V120.2 Q49.9 121.4 48.7 121.4 H45.6 Q44.9 121.4 44.9 120.7 V117.9 Q44.9 116.2 43.2 116.2 H41.6 Q39.9 116.2 39.9 117.9 V120.7 Q39.9 121.4 39.2 121.4 H36.1 Q34.9 121.4 34.9 120.2 Z"/>
</svg>
<div class="abs" style="left:73px;top:107px;width:1px;height:16px;background:#d5d7da"></div>
<!-- app icon -->
<div class="abs" style="left:97px;top:94px;width:38.5px;height:40px;border:1px solid #e9e9eb;border-radius:9.5px;background:#fff"></div>
<svg style="left:97px;top:94px" width="39" height="40" viewBox="97 94 39 40">
  <path d="M113.6 96.2 Q115.8 94.9 118 96.2 L130.6 103.5 Q132.9 104.9 132.9 107.5 V121.4 Q132.9 124 130.6 125.4 L118 132.6 Q115.8 133.9 113.6 132.6 L101 125.4 Q98.6 124 98.6 121.4 V107.5 Q98.6 104.9 101 103.5 Z" fill="#03a9ae"/>
  <path d="M110.4 102.8 H120.8 Q122 102.8 122 104 V107.2 Q122 108.4 120.8 108.4 H110.6 Q110 108.4 110 109 V120.4 Q110 121 110.6 121 H120.8 Q122 121 122 122.2 V125.4 Q122 126.6 120.8 126.6 H110.4 Q109.2 126.6 109.2 125.4 V122.2 Q109.2 121.4 108.4 121.4 H105 Q103.8 121.4 103.8 120.2 V109.2 Q103.8 108 105 108 H108.4 Q109.2 108 109.2 107.2 V104 Q109.2 102.8 110.4 102.8Z" fill="#fff"/>
  <circle cx="124.8" cy="117.5" r="3.1" fill="#5cf0c4"/>
</svg>
<div class="t" style="left:144px;top:94px;font-size:14px;color:#1f2329;letter-spacing:.35px">CordysCRM</div>
<div class="abs" style="left:230.5px;top:96px;width:38px;height:16px;border-radius:4px;background:#d6f2da;color:#258832;font-size:10px;line-height:16.5px;text-align:center;white-space:nowrap;font-weight:500;-webkit-text-stroke:.25px #258832">已启用</div>
<div class="t" style="left:144.5px;top:116px;font-size:12px;line-height:20px;height:20px;color:#8f959e">正式应用<span style="letter-spacing:-.6px">@l</span></div>
<div class="t" style="left:271px;top:116px;font-size:12px;line-height:20px;height:20px;color:#8f959e">e</div>
<div class="abs" style="left:205.5px;top:119px;width:68px;height:17px;background:linear-gradient(90deg,#eeefef,#f1f2f2 60%,#f0f1f1)"></div>
<!-- notice -->
<div class="abs" style="left:300px;top:92px;width:348px;height:44px;border-radius:6px;background:#fef2e3"></div>
<div class="abs" style="left:317px;top:107px;width:14px;height:14px;border-radius:50%;background:#ff811a"></div>
<div class="abs" style="left:323.35px;top:110.2px;width:1.3px;height:4.8px;background:#fff1e0;border-radius:1px"></div>
<div class="abs" style="left:323.3px;top:116.3px;width:1.4px;height:1.4px;background:#fff1e0;border-radius:1px"></div>
<div class="t" style="left:340px;top:103px;font-size:14px;color:#1f2329">版本发布后，当前修改方可生效</div>
<div class="t blue" style="left:572px;top:103px;font-size:14px">创建版本</div>


<!-- TOPNAV -->
<div id="topnav"></div>
<svg style="left:36px;top:38px" width="30" height="24" viewBox="36 38 30 24">
  <path d="M41.9 39.4 L53.4 39.5 Q56.2 42.4 57 45.9 Q53.4 47.3 51.1 50.3 Q47.6 43.6 41.9 39.4Z" fill="#00d6b9"/>
  <path d="M36.9 46.1 Q42 51.2 48.4 53.3 Q53.5 55.6 58 55.4 Q53 61 46.6 60.8 Q41 60.4 36.9 57.8Z" fill="#3370ff"/>
  <path d="M48.4 53.3 Q51.2 49 57 46.1 Q60.4 45.2 63.7 46.1 Q61.4 51.4 58 55.4 Q53.5 55.6 48.4 53.3Z" fill="#133c9a"/>
</svg>
<div class="t" style="left:69px;top:39px;font-size:18px;line-height:24px;height:24px;font-weight:700;color:#1f2329;letter-spacing:-.2px">飞书开放平台</div>
<div class="nav" style="left:218px">客户案例</div>
<div class="nav" style="left:310px">开发文档</div>
<div class="nav" style="left:402px">更新日志</div>
<div class="nav" style="left:494px">应用中心</div>
<div class="nav" style="left:586px">开发者广场</div>
<div class="nav" style="left:694px">智能助手</div>
<div class="abs" style="left:1312px;top:34px;width:400px;height:32px;border:1px solid #bbbfc4;border-radius:6px;background:#fff"></div>
<svg style="left:1324px;top:42px" width="16" height="16" viewBox="0 0 16 16" fill="none" stroke="#2b2f36" stroke-width="1.4" stroke-linecap="round"><circle cx="7.2" cy="7.2" r="5.3"/><path d="M11.2 11.2 L14 14"/></svg>
<div class="t" style="left:1348px;top:39px;font-size:14px;color:#8f959e">你可以输入文档关键词、开发问题、Log ID、错误码</div>
<div class="abs" style="left:1730px;top:34px;width:86px;height:32px;border-radius:6px;background:#1456f0;color:#fff;font-size:14px;line-height:32px;text-align:center;white-space:nowrap">开发者后台</div>
<svg style="left:1834px;top:40px" width="20" height="20" viewBox="1834 40 20 20" fill="#1f2329">
  <circle cx="1837.2" cy="43.3" r="1.7"/><circle cx="1843.9" cy="43.3" r="1.7"/><circle cx="1850.6" cy="43.3" r="1.7"/>
  <circle cx="1837.2" cy="50" r="1.7"/><circle cx="1843.9" cy="50" r="1.7"/><circle cx="1850.6" cy="50" r="1.7"/>
  <circle cx="1837.2" cy="56.7" r="1.7"/><circle cx="1843.9" cy="56.7" r="1.7"/><circle cx="1850.6" cy="56.7" r="1.7"/>
</svg>
<div class="abs" style="left:1870px;top:34px;width:45px;height:40px;background:radial-gradient(ellipse 22px 20px at 48% 46%,#e1d4fb 0%,#e8defc 45%,#f0eafd 100%)"></div>


<!-- FLOAT -->
<div class="abs" style="left:1917px;top:157px;width:9px;height:571px;background:#b9bbbe;border-radius:4.5px 0 0 4.5px"></div>
<div class="abs" style="left:1881.5px;top:827.5px;width:50px;height:64px;background:#fff;border:1px solid #e6e7e9;border-radius:8px;box-shadow:0 2px 14px rgba(31,35,41,.13)"></div>
<svg style="left:1895px;top:839px" width="22" height="20" viewBox="1895 839 22 20" fill="none" stroke="#1f2329" stroke-width="1.6" stroke-linecap="round" stroke-linejoin="round"><path d="M1904.6 841.4 L1897 849 L1904.6 856.6 M1913.8 841.4 L1906.2 849 L1913.8 856.6"/></svg>
<div class="t" style="left:1893.5px;top:866px;font-size:12px;line-height:20px;height:20px;font-weight:500;color:#1f2329;-webkit-text-stroke:.25px #1f2329">展开</div>
<!-- /FLOAT -->

</div>
</body>
</html>
